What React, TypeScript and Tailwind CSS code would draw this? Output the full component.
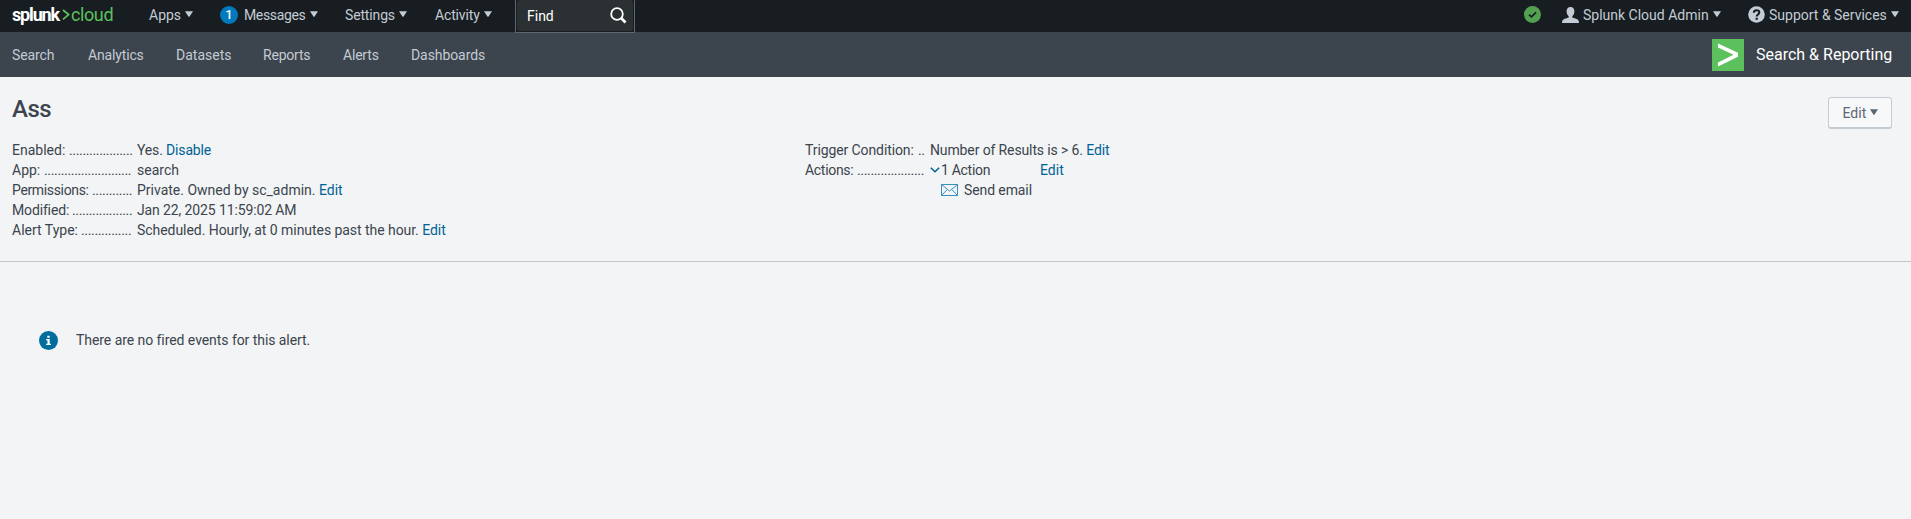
import React from 'react';

function Caret({ className = '' }: { className?: string }) {
  return (
    <svg className={`shrink-0 ${className}`} width="8" height="6" viewBox="0 0 8 6" fill="currentColor">
      <path d="M0 .3h8L4.6 5.4a.8.8 0 0 1-1.2 0z" />
    </svg>
  );
}

function MenuItem({ label, width, tracking = '' }: { label: string; width: string; tracking?: string }) {
  return (
    <span className="flex items-center">
      <span className={`${width} ${tracking} shrink-0 whitespace-nowrap`}>{label}</span>
      <Caret className="mb-px ml-[5px]" />
    </span>
  );
}

function Row({ label, labelWidth, dots, dotsWidth, tracking = '', children }: {
  label: string; labelWidth: string; dots: number; dotsWidth: string; tracking?: string; children: React.ReactNode;
}) {
  return (
    <div className="flex h-5 items-center whitespace-nowrap">
      <span className={`${labelWidth} ${tracking} shrink-0`}>{label}</span>
      <span className={`${dotsWidth} mr-[5px] shrink-0 tracking-[-0.34px]`}>{'.'.repeat(dots)}</span>
      {children}
    </div>
  );
}

function Logo() {
  return (
    <span className="flex w-[103px] shrink-0 items-center text-[18px] leading-[20px] whitespace-nowrap">
      <b className="w-[49px] tracking-[-1.15px] text-white">splunk</b>
      <svg width="8" height="14" viewBox="0 0 8 14" className="mt-px ml-px shrink-0" fill="none" stroke="#5cc05c" strokeWidth="1.8">
        <path d="M1 2l5.6 4.6L1 11.4" />
      </svg>
      <span className="ml-px tracking-[-0.4px] text-[#5cc05c]">cloud</span>
    </span>
  );
}

export default function App() {
  return (
    <div className="min-h-[519px] w-full bg-[#f2f4f5] font-[Roboto,sans-serif] text-[14px] leading-5 text-[#3c444d]">
      <header className="flex h-8 items-start bg-[#171d21] pl-3 text-[#c3cbd4]">
        <div className="flex h-[29px] items-center">
          <Logo />
          <div className="ml-[34px]"><MenuItem label="Apps" width="w-[31px]" /></div>
          <span className="ml-[27px] flex size-[18px] items-center justify-center rounded-full bg-[#007abd] text-[13px] font-medium text-white">1</span>
          <div className="ml-[6px]"><MenuItem label="Messages" width="w-[61px]" tracking="tracking-[-0.35px]" /></div>
          <div className="ml-[27px]"><MenuItem label="Settings" width="w-[49px]" tracking="tracking-[-0.15px]" /></div>
          <div className="ml-[28px]"><MenuItem label="Activity" width="w-[44px]" tracking="tracking-[-0.15px]" /></div>
        </div>
        <div className="z-10 ml-[23px] h-[33px] w-[120px] border border-t-0 border-[#5c6773] bg-[#171d21] px-px pb-px">
          <div className="flex h-[31px] items-center justify-between rounded-[3px] bg-[#2b3033] pr-[6px] pl-[10px] text-white">
            <span>Find</span>
            <svg width="17" height="17" viewBox="0 0 17 17" fill="none" stroke="currentColor">
              <circle cx="7" cy="7" r="5.8" strokeWidth="1.8" />
              <path d="M11.3 11.3l4.2 4.2" strokeWidth="2.8" />
            </svg>
          </div>
        </div>
        <div className="ml-auto flex h-[29px] items-center pr-3">
          <svg width="17" height="17" viewBox="0 0 17 17">
            <circle cx="8.5" cy="8.5" r="8.5" fill="#53a051" />
            <path d="M5 8.6l2.5 2.3L12 6.3" fill="none" stroke="#171d21" strokeWidth="1.7" />
          </svg>
          <svg className="ml-[21px]" width="17" height="16" viewBox="0 0 17 16" fill="currentColor">
            <path d="M8.5 0C6 0 4.6 1.7 4.6 4.2c0 2.1.8 4 2.1 5v1.2L2.3 12.1C.8 12.7.2 13.6 0 16h17c-.2-2.4-.8-3.3-2.3-3.9l-4.4-1.7V9.2c1.3-1 2.1-2.9 2.1-5C12.4 1.7 11 0 8.5 0z" />
          </svg>
          <div className="ml-1"><MenuItem label="Splunk Cloud Admin" width="w-[125px]" /></div>
          <svg className="ml-[27px]" width="17" height="17" viewBox="0 0 17 17">
            <circle cx="8.5" cy="8.5" r="8.3" fill="#c3cbd4" />
            <path d="M5.8 6.7c0-3.4 5.5-3.2 5.5-.2 0 2-2.6 1.9-2.6 4" fill="none" stroke="#171d21" strokeWidth="2" />
            <path d="M7.6 11.7h2.2v2.1H7.6z" fill="#171d21" />
          </svg>
          <div className="ml-1"><MenuItem label="Support &amp; Services" width="w-[117px]" /></div>
        </div>
      </header>

      <nav className="flex h-[45px] items-center bg-[#3c444d] pr-[19px] pl-3 whitespace-nowrap text-[#c3cbd4]">
        <span className="w-[76px] tracking-[-0.1px]">Search</span>
        <span className="w-[88px] tracking-[-0.15px]">Analytics</span>
        <span className="w-[87px]">Datasets</span>
        <span className="w-[80px] tracking-[-0.2px]">Reports</span>
        <span className="w-[68px] tracking-[-0.2px]">Alerts</span>
        <span className="tracking-[-0.08px]">Dashboards</span>
        <div className="ml-auto flex items-center">
          <svg width="32" height="32" viewBox="0 0 32 32">
            <path fill="#5cc05c" d="M0 0h32v32H0z" />
            <path fill="#fff" d="M6 4.5l20 9.3v4L6 27.5v-4l15.500-7.700L6 8.500z" />
          </svg>
          <span className="ml-3 w-[136px] text-[16px] text-white">Search &amp; Reporting</span>
        </div>
      </nav>

      <section className="flex h-[185px] flex-col border-b border-[#c2c5ca] pr-[19px] pl-3">
        <div className="flex items-start justify-between pt-5">
          <h1 className="text-[24px] leading-6 font-medium tracking-[-0.5px]">Ass</h1>
          <button className="flex h-8 w-16 items-center justify-center rounded-[3px] border border-b-2 border-[#c3cbd4] bg-[#f7f8fa] text-[#5c6773]">
            <span className="w-[23px]">Edit</span>
            <Caret className="mb-px ml-1" />
          </button>
        </div>
        <div className="mt-[11px] flex">
          <div className="w-[793px]">
            <Row label="Enabled:" labelWidth="w-[57px]" dots={19} dotsWidth="w-[63px]"><span className="tracking-[-0.15px]">Yes. <a className="text-[#006297]">Disable</a></span></Row>
            <Row label="App:" labelWidth="w-[32px]" dots={26} dotsWidth="w-[88px]">search</Row>
            <Row label="Permissions:" labelWidth="w-[80px]" tracking="tracking-[-0.35px]" dots={12} dotsWidth="w-[40px]"><span>Private. Owned by sc_admin. <a className="text-[#006297]">Edit</a></span></Row>
            <Row label="Modified:" labelWidth="w-[60px]" tracking="tracking-[-0.15px]" dots={18} dotsWidth="w-[60px]"><span className="tracking-[-0.12px]">Jan 22, 2025 11:59:02 AM</span></Row>
            <Row label="Alert Type:" labelWidth="w-[69px]" dots={15} dotsWidth="w-[51px]"><span className="tracking-[-0.05px]">Scheduled. Hourly, at 0 minutes past the hour. <a className="text-[#006297]">Edit</a></span></Row>
          </div>
          <div>
            <Row label="Trigger Condition:" labelWidth="w-[113px]" tracking="tracking-[-0.1px]" dots={2} dotsWidth="w-[7px]"><span className="tracking-[-0.12px]">Number of Results is &gt; 6. <a className="text-[#006297]">Edit</a></span></Row>
            <Row label="Actions:" labelWidth="w-[52px]" tracking="tracking-[-0.3px]" dots={20} dotsWidth="w-[68px]">
              <svg width="10" height="6" viewBox="0 0 10 6" fill="none" stroke="#006297" strokeWidth="1.5"><path d="M.8.8L5 4.8 9.2.8" /></svg>
              <span className="ml-px w-[99px] tracking-[-0.3px]">1 Action</span>
              <a className="text-[#006297]">Edit</a>
            </Row>
            <div className="flex h-5 items-center pl-[136px]">
              <svg width="17" height="12" viewBox="0 0 17 12" fill="none" stroke="#3a8fc0" strokeWidth="1">
                <path d="M.5.5h16v11H.5zM.5.5l8 6.5 8-6.5M.5 11.5l5.7-6M16.5 11.5l-5.7-6" />
              </svg>
              <span className="ml-[6px] tracking-[-0.1px]">Send email</span>
            </div>
          </div>
        </div>
      </section>

      <div className="flex items-center pt-[68px] pl-[39px]">
        <svg width="19" height="19" viewBox="0 0 19 19">
          <circle cx="9.5" cy="9.5" r="9.5" fill="#006d9c" />
          <path d="M8.3 4.8h2.4v2H8.3zM7.2 8h3.5v4.7H12v1.4H7.2v-1.4h1.3V9.4H7.2z" fill="#fff" />
        </svg>
        <span className="ml-[18px] tracking-[-0.06px]">There are no fired events for this alert.</span>
      </div>
    </div>
  );
}
